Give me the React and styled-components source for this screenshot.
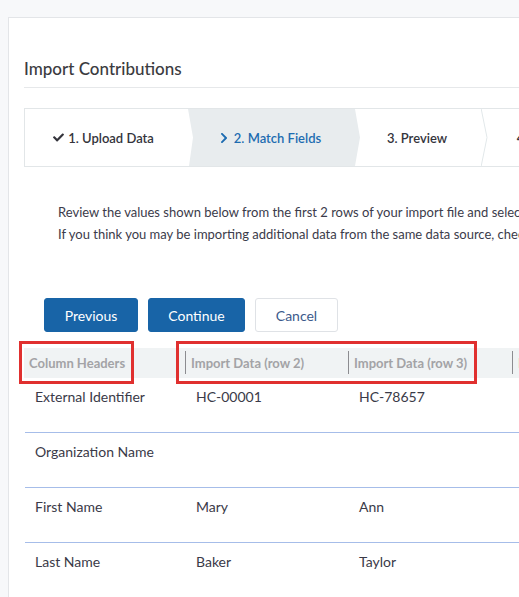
import React from 'react'
import styled, { createGlobalStyle } from 'styled-components'
import { FaCheck, FaChevronRight } from 'react-icons/fa'

const GlobalStyle = createGlobalStyle`
  html, body {
    margin: 0;
    padding: 0;
    background: #f7f8fa;
    overflow: hidden;
  }
  body {
    font-family: Lato, "Open Sans", sans-serif;
    color: #3a3a44;
  }
`

const Page = styled.div`
  padding: 17px 0 0 8px;
  width: 900px;
`

const Card = styled.div`
  background: #ffffff;
  border: 1px solid #e3e5e8;
  border-right: none;
  padding: 0 0 40px 15px;
`

const Title = styled.h1`
  margin: 39px 0 0;
  padding-bottom: 6px;
  border-bottom: 1px solid #e6e8ea;
  font-size: 17px;
  line-height: 24px;
  font-weight: 500;
  color: #3b3b40;
`

const Steps = styled.div`
  display: flex;
  margin-top: 20px;
  height: 57px;
  border: 1px solid #e2e6e8;
`

const Step = styled.div`
  position: relative;
  display: flex;
  align-items: center;
  justify-content: center;
  gap: 4px;
  box-sizing: border-box;
  width: ${p => p.$w}px;
  margin-left: ${p => p.$ml || 0}px;
  padding-right: 9px;
  font-size: 13px;
  font-weight: 600;
  color: ${p => (p.$active ? '#1d6cb1' : '#34343c')};
  background: ${p => (p.$active ? '#e8ecee' : 'transparent')};
  clip-path: ${p =>
    p.$active
      ? 'polygon(0 0, calc(100% - 5px) 0, 100% 50%, calc(100% - 5px) 100%, 1px 100%, 5px 50%)'
      : 'none'};
  svg.icon {
    font-size: ${p => (p.$active ? 12 : 11)}px;
  }
`

const Sep = styled.svg`
  position: absolute;
  right: 0;
  top: -1px;
  width: 7px;
  height: 59px;
`

const Intro = styled.div`
  margin-top: 34px;
  padding-left: 34px;
  font-size: 13px;
  line-height: 22px;
  color: #3b3b4a;
  white-space: nowrap;
`

const Actions = styled.div`
  display: flex;
  gap: 10px;
  margin: 53px 0 0 20px;
`

const Button = styled.button`
  height: 34px;
  width: ${p => p.$w}px;
  border-radius: 3px;
  font-family: inherit;
  font-size: 14px;
  cursor: pointer;
  border: 1px solid ${p => (p.$primary ? '#1864a7' : '#dfe2e6')};
  background: ${p => (p.$primary ? '#1864a7' : '#ffffff')};
  color: ${p => (p.$primary ? '#ffffff' : '#3c5a8c')};
`

const Table = styled.div`
  position: relative;
  margin-top: 16px;
`

const HeadRow = styled.div`
  display: grid;
  grid-template-columns: 161px 163px 164px 163px;
  height: 30px;
  background: #f0f3f4;
`

const HeadCell = styled.div`
  display: flex;
  align-items: center;
  padding-left: 5px;
  font-size: 13px;
  font-weight: 700;
  color: #a3a3a6;
  border-left: ${p => (p.$sep ? '1px solid #8c8c90' : 'none')};
  margin: 3px 0 4px;
`

const Row = styled.div`
  display: grid;
  grid-template-columns: 161px 163px 164px 163px;
  height: 54px;
  margin-left: 1px;
  border-bottom: ${p => (p.$last ? 'none' : '1px solid #a6bde9')};
`

const Cell = styled.div`
  padding: 10px 0 0 10px;
  font-size: 14px;
  line-height: 18px;
  color: #3a3a48;
`

const Highlight = styled.div`
  position: absolute;
  top: -7px;
  left: ${p => p.$x}px;
  width: ${p => p.$w}px;
  height: 43px;
  box-sizing: border-box;
  border: 3px solid #e0302f;
  pointer-events: none;
`

const rows = [
  ['External Identifier', 'HC-00001', 'HC-78657'],
  ['Organization Name', '', ''],
  ['First Name', 'Mary', 'Ann'],
  ['Last Name', 'Baker', 'Taylor'],
]

const Chevron = ({ color }) => (
  <Sep viewBox="0 0 7 59">
    <polyline points="0,0 6,29.5 0,59" fill="none" stroke={color} strokeWidth="1" />
  </Sep>
)

export default function App() {
  return (
    <Page>
      <GlobalStyle />
      <Card>
        <Title>Import Contributions</Title>
        <Steps>
          <Step $w={166}>
            <FaCheck className="icon" />
            1. Upload Data
          </Step>
          <Step $w={172} $ml={-3} $active>
            <FaChevronRight className="icon" />
            2. Match Fields
          </Step>
          <Step $w={133} $ml={-5}>
            3. Preview
            <Chevron color="#e2e8ea" />
          </Step>
          <Step $w={119}>4. Import</Step>
        </Steps>
        <Intro>
          Review the values shown below from the first 2 rows of your import file and select the matching fields.
          <br />
          If you think you may be importing additional data from the same data source, check the box below.
        </Intro>
        <Actions>
          <Button $primary $w={94}>Previous</Button>
          <Button $primary $w={97}>Continue</Button>
          <Button $w={83}>Cancel</Button>
        </Actions>
        <Table>
          <HeadRow>
            <HeadCell>Column Headers</HeadCell>
            <HeadCell $sep>Import Data (row 2)</HeadCell>
            <HeadCell $sep>Import Data (row 3)</HeadCell>
            <HeadCell $sep>Import Data (row 4)</HeadCell>
          </HeadRow>
          {rows.map((r, i) => (
            <Row key={r[0]} $last={i === rows.length - 1}>
              <Cell>{r[0]}</Cell>
              <Cell>{r[1]}</Cell>
              <Cell>{r[2]}</Cell>
              <Cell />
            </Row>
          ))}
          <Highlight $x={-5} $w={115} />
          <Highlight $x={152} $w={301} />
        </Table>
      </Card>
    </Page>
  )
}
